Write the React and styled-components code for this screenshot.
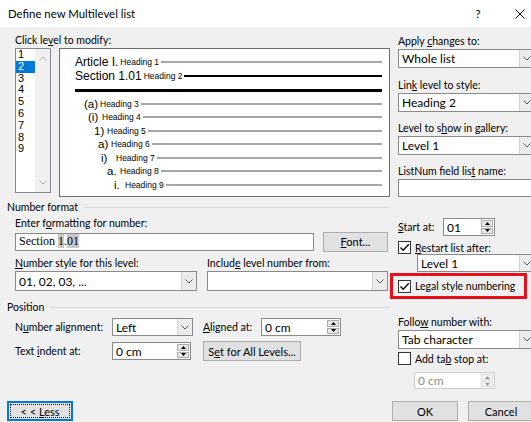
import React from 'react';
import styled, { createGlobalStyle } from 'styled-components';

const GlobalStyle = createGlobalStyle`
  html, body {
    margin: 0;
    padding: 0;
    background: #f0f0f0;
  }
  * {
    box-sizing: border-box;
  }
`;

const Window = styled.div`
  width: 531px;
  height: 422px;
  overflow: hidden;
  background: #f0f0f0;
  display: flex;
  flex-direction: column;
  font-family: Lato, "Noto Sans", sans-serif;
  font-size: 10.5px;
  color: #000;
`;

const TitleBar = styled.div`
  height: 27px;
  flex: none;
  background: #fff;
  display: flex;
  align-items: center;
  padding: 0 6px 0 8px;
`;

const Title = styled.div`
  flex: 1;
  font-size: 11.4px;
`;

const HelpMark = styled.div`
  width: 12px;
  margin-right: 31px;
  text-align: center;
  font-size: 12px;
`;

const Main = styled.div`
  display: flex;
`;

const LeftCol = styled.div`
  width: 390px;
  flex: none;
  padding: 5px 0 0 7px;
`;

const RightCol = styled.div`
  width: 141px;
  flex: none;
  padding: 6px 0 0 8px;
  display: flex;
  flex-direction: column;
`;

const Label = styled.div`
  line-height: 16px;
  height: 16px;
  white-space: nowrap;
  width: ${p => (p.$w ? `${p.$w}px` : 'auto')};
  flex: none;
  margin-left: ${p => p.$ml || 0}px;
  margin-top: ${p => p.$mt || 0}px;
`;

const TopRow = styled.div`
  display: flex;
  gap: 8px;
  margin-left: 8px;
`;

const ListBox = styled.div`
  width: 36px;
  height: 145px;
  border: 1px solid #828790;
  background: #fff;
  display: flex;
`;

const ListItems = styled.div`
  width: 19px;
  font-family: "Liberation Sans", Arial, sans-serif;
  font-size: 11px;
`;

const ListItem = styled.div`
  height: 11.8px;
  line-height: 11.8px;
  padding-left: 2px;
  background: ${p => (p.$selected ? '#0078d7' : 'transparent')};
  color: ${p => (p.$selected ? '#fff' : '#000')};
`;

const ScrollTrack = styled.div`
  width: 15px;
  background: #f0f0f0;
  display: flex;
  flex-direction: column;
  justify-content: space-between;
  align-items: center;
  padding: 7px 0 7px;
`;

const Preview = styled.div`
  width: 331px;
  height: 149px;
  border: 1px solid #6e6e6e;
  background: #fff;
  padding: 6px 7px 0 15px;
  font-family: "Liberation Sans", Arial, sans-serif;
`;

const PreviewRow = styled.div`
  display: flex;
  align-items: center;
  height: ${p => p.$h}px;
  white-space: nowrap;
`;

const BigNum = styled.span`
  font-size: 12px;
  margin-right: 2px;
`;

const LevelNum = styled.span`
  font-size: 11.5px;
  flex: none;
  margin-left: ${p => p.$indent}px;
  width: ${p => p.$w}px;
`;

const HeadText = styled.span`
  font-size: 8.5px;
`;

const Rule = styled.div`
  flex: 1;
  height: ${p => p.$t}px;
  margin-left: ${p => (p.$full ? 0 : 2)}px;
  background: ${p => p.$c};
`;

const SectionHead = styled.div`
  display: flex;
  align-items: center;
  height: 14px;
  margin-top: ${p => p.$mt}px;
`;

const HeadLine = styled.div`
  flex: 1;
  margin-left: 6px;
  border-top: 1px solid #dcdcdc;
`;

const Indent = styled.div`
  margin-left: 8px;
  margin-top: ${p => p.$mt || 0}px;
`;

const Row = styled.div`
  display: flex;
  align-items: center;
  height: ${p => p.$h}px;
  margin-top: ${p => p.$mt || 0}px;
  margin-left: ${p => p.$ml || 0}px;
`;

const TwoCols = styled.div`
  display: grid;
  grid-template-columns: 182px 181px;
  column-gap: 10px;
  margin-left: 8px;
  margin-top: 3px;
`;

const FieldBox = styled.div`
  height: ${p => p.$h || 19}px;
  width: ${p => p.$w}px;
  flex: none;
  margin-left: ${p => p.$ml || 0}px;
  border: 1px solid ${p => (p.$disabled ? '#cccccc' : '#8a8a8a')};
  background: #fff;
  display: flex;
  align-items: stretch;
  font-size: 12px;
  color: ${p => (p.$disabled ? '#8d8d8d' : '#000')};
`;

const FieldText = styled.div`
  flex: 1;
  display: flex;
  align-items: center;
  padding-left: 3px;
  white-space: nowrap;
  overflow: hidden;
`;

const SerifText = styled.span`
  font-family: "Liberation Serif", "Times New Roman", serif;
  font-size: 12px;
`;

const Shaded = styled.span`
  background: #c8c8c8;
`;

const DropButton = styled.div`
  width: 15px;
  flex: none;
  background: #ececec;
  border-left: 1px solid #d0d0d0;
  display: flex;
  align-items: center;
  justify-content: center;
`;

const SpinButtons = styled.div`
  width: 13px;
  flex: none;
  display: flex;
  flex-direction: column;
  gap: 1px;
  padding: 1px 1px 1px 0;
`;

const SpinHalf = styled.div`
  flex: 1;
  background: ${p => (p.$disabled ? '#f4f4f4' : '#e6e6e6')};
  border: 1px solid ${p => (p.$disabled ? '#d8d8d8' : '#adadad')};
  display: flex;
  align-items: center;
  justify-content: center;
`;

const Button = styled.div`
  position: relative;
  width: ${p => p.$w}px;
  height: ${p => p.$h || 20}px;
  flex: none;
  margin-left: ${p => p.$ml || 0}px;
  background: #e1e1e1;
  border: ${p => (p.$focus ? '2px solid #0078d7' : '1px solid #adadad')};
  display: flex;
  align-items: center;
  justify-content: center;
  white-space: nowrap;
  font-size: 11px;
  &::after {
    content: '';
    display: ${p => (p.$focus ? 'block' : 'none')};
    position: absolute;
    inset: 1px;
    border: 1px dotted #222;
  }
`;

const CheckRow = styled.div`
  display: flex;
  align-items: center;
  gap: 4px;
  height: 13px;
  margin-top: ${p => p.$mt || 0}px;
  white-space: nowrap;
`;

const Box = styled.div`
  width: 13px;
  height: 13px;
  flex: none;
  border: 1px solid #333;
  background: #fff;
  display: flex;
  align-items: center;
  justify-content: center;
`;

const Highlight = styled.div`
  width: 137px;
  height: 26px;
  margin: 1px 0 0 -8px;
  border: 3px solid #e8101c;
  padding-left: 5px;
  display: flex;
  align-items: center;
`;

const Footer = styled.div`
  width: 534px;
  flex: none;
  margin-top: auto;
  padding: 0 0 1px 7px;
  display: flex;
  align-items: center;
`;

const Spacer = styled.div`
  flex: 1;
`;

const Chevron = ({ up, color = '#555' }) => (
  <svg width="8" height="5" viewBox="0 0 8 5">
    <polyline
      points={up ? '0.5,4.5 4,1 7.5,4.5' : '0.5,0.5 4,4 7.5,0.5'}
      fill="none"
      stroke={color}
      strokeWidth="1"
    />
  </svg>
);

const Tri = ({ up, color = '#000' }) => (
  <svg width="5" height="3" viewBox="0 0 5 3">
    <polygon points={up ? '0,3 2.5,0 5,3' : '0,0 5,0 2.5,3'} fill={color} />
  </svg>
);

const Tick = () => (
  <svg width="11" height="11" viewBox="0 0 11 11">
    <polyline points="1.5,5.5 4.2,8.3 9.8,2.2" fill="none" stroke="#000" strokeWidth="1.3" />
  </svg>
);

const CloseIcon = () => (
  <svg width="10" height="10" viewBox="0 0 10 10">
    <path d="M0.5 0.5 L9.5 9.5 M9.5 0.5 L0.5 9.5" stroke="#000" strokeWidth="1" />
  </svg>
);

const Select = ({ w, h, ml, value }) => (
  <FieldBox $w={w} $h={h} $ml={ml}>
    <FieldText>{value}</FieldText>
    <DropButton>
      <Chevron />
    </DropButton>
  </FieldBox>
);

const Spinner = ({ w, h, ml, value, disabled }) => (
  <FieldBox $w={w} $h={h} $ml={ml} $disabled={disabled}>
    <FieldText>{value}</FieldText>
    <SpinButtons>
      <SpinHalf $disabled={disabled}>
        <Tri up color={disabled ? '#9a9a9a' : '#000'} />
      </SpinHalf>
      <SpinHalf $disabled={disabled}>
        <Tri color={disabled ? '#9a9a9a' : '#000'} />
      </SpinHalf>
    </SpinButtons>
  </FieldBox>
);

const Check = ({ checked, children, mt }) => (
  <CheckRow $mt={mt}>
    <Box>{checked && <Tick />}</Box>
    <span>{children}</span>
  </CheckRow>
);

const levels = [
  { n: '(a)', x: 83, h: 99, label: 'Heading 3' },
  { n: '(i)', x: 87, h: 101, label: 'Heading 4' },
  { n: '1)', x: 93, h: 106, label: 'Heading 5' },
  { n: 'a)', x: 97, h: 110, label: 'Heading 6' },
  { n: 'i)', x: 100, h: 115, label: 'Heading 7' },
  { n: 'a.', x: 106, h: 119, label: 'Heading 8' },
  { n: 'i.', x: 113, h: 124, label: 'Heading 9' },
];

export default function App() {
  return (
    <>
      <GlobalStyle />
      <Window>
        <TitleBar>
          <Title>Define new Multilevel list</Title>
          <HelpMark>?</HelpMark>
          <CloseIcon />
        </TitleBar>

        <Main>
          <LeftCol>
            <Label $ml={8}>Click le<u>v</u>el to modify:</Label>
            <TopRow>
              <ListBox>
                <ListItems>
                  {[1, 2, 3, 4, 5, 6, 7, 8, 9].map(i => (
                    <ListItem key={i} $selected={i === 2}>{i}</ListItem>
                  ))}
                </ListItems>
                <ScrollTrack>
                  <Chevron up color="#b0b0b0" />
                  <Chevron color="#b0b0b0" />
                </ScrollTrack>
              </ListBox>
              <Preview>
                <PreviewRow $h={14}>
                  <BigNum>Article I.</BigNum>
                  <HeadText>Heading 1</HeadText>
                  <Rule $t={2} $c="#a6a6a6" />
                </PreviewRow>
                <PreviewRow $h={14}>
                  <BigNum>Section 1.01</BigNum>
                  <HeadText>Heading 2</HeadText>
                  <Rule $t={2} $c="#000" />
                </PreviewRow>
                <PreviewRow $h={14}>
                  <Rule $t={3} $c="#000" $full />
                </PreviewRow>
                {levels.map(l => (
                  <PreviewRow key={l.label} $h={13.5}>
                    <LevelNum $indent={l.x - 74} $w={l.h - l.x}>{l.n}</LevelNum>
                    <HeadText>{l.label}</HeadText>
                    <Rule $t={2} $c="#a6a6a6" />
                  </PreviewRow>
                ))}
              </Preview>
            </TopRow>

            <SectionHead $mt={3}>
              Number format
              <HeadLine />
            </SectionHead>
            <Label $ml={8} $mt={1}>Enter f<u>o</u>rmatting for number:</Label>
            <Row $h={21} $ml={8}>
              <FieldBox $w={299} $h={18}>
                <FieldText>
                  <SerifText>
                    Section <Shaded>1</Shaded>.<Shaded>01</Shaded>
                  </SerifText>
                </FieldText>
              </FieldBox>
              <Button $w={65} $ml={9}><span><u>F</u>ont...</span></Button>
            </Row>
            <TwoCols>
              <div>
                <Label><u>N</u>umber style for this level:</Label>
                <Select w={182} h={20} value="01, 02, 03, ..." />
              </div>
              <div>
                <Label>Includ<u>e</u> level number from:</Label>
                <Select w={181} h={20} value="" />
              </div>
            </TwoCols>

            <SectionHead $mt={9}>
              Position
              <HeadLine />
            </SectionHead>
            <Indent>
              <Row $h={18} $mt={4}>
                <Label $w={97}>N<u>u</u>mber alignment:</Label>
                <Select w={81} h={18} value="Left" />
                <Label $w={58} $ml={10}><u>A</u>ligned at:</Label>
                <Spinner w={80} h={18} value="0 cm" />
              </Row>
              <Row $h={20} $mt={5}>
                <Label $w={97}>Text <u>i</u>ndent at:</Label>
                <Spinner w={79} h={18} value="0 cm" />
                <Button $w={98} $ml={12}><span>S<u>e</u>t for All Levels...</span></Button>
              </Row>
            </Indent>
          </LeftCol>

          <RightCol>
            <Label>Apply <u>c</u>hanges to:</Label>
            <Select w={137} h={19} value="Whole list" />
            <Label $mt={9}>Lin<u>k</u> level to style:</Label>
            <Select w={137} h={19} value="Heading 2" />
            <Label $mt={8}>Level to s<u>h</u>ow in gallery:</Label>
            <Select w={137} h={19} value="Level 1" />
            <Label $mt={8}>ListNum field lis<u>t</u> name:</Label>
            <FieldBox $w={137} $h={18} />

            <Row $h={18} $mt={21}>
              <Label $w={45}><u>S</u>tart at:</Label>
              <Spinner w={52} h={18} value="01" />
            </Row>
            <Check checked mt={5}><u>R</u>estart list after:</Check>
            <Select w={118} h={18} ml={19} value="Level 1" />
            <Highlight>
              <Check checked>Le<u>g</u>al style numbering</Check>
            </Highlight>

            <Label $mt={15}>Follo<u>w</u> number with:</Label>
            <Select w={137} h={19} value="Tab character" />
            <Check mt={3}>Add ta<u>b</u> stop at:</Check>
            <Row $h={17} $mt={7}>
              <Spinner w={81} h={17} ml={16} value="0 cm" disabled />
            </Row>
          </RightCol>
        </Main>

        <Footer>
          <Button $w={66} $focus><span>&lt; &lt; <u>L</u>ess</span></Button>
          <Spacer />
          <Button $w={66}>OK</Button>
          <Button $w={66} $ml={10}>Cancel</Button>
        </Footer>
      </Window>
    </>
  );
}
